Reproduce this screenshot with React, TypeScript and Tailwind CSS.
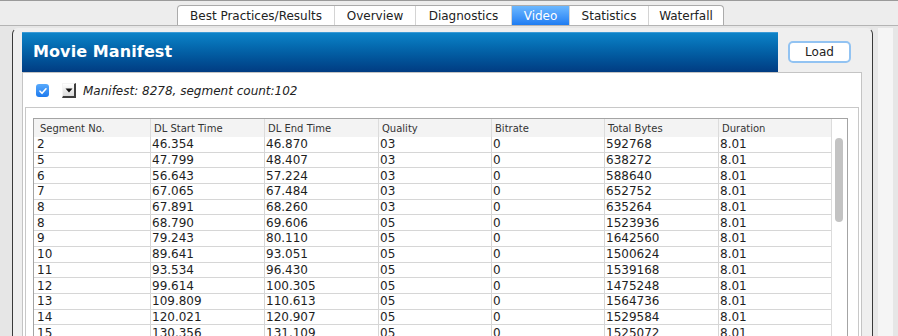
import React from 'react'

const TABS = [
  { label: 'Best Practices/Results', w: 'w-[156px]' },
  { label: 'Overview', w: 'w-[81px]' },
  { label: 'Diagnostics', w: 'w-[96px]' },
  { label: 'Video', w: 'w-[58px]', active: true },
  { label: 'Statistics', w: 'w-[79px]' },
  { label: 'Waterfall', w: 'w-[75px]' },
]

const COLUMNS = [
  { label: 'Segment No.', w: 'w-[116px]' },
  { label: 'DL Start Time', w: 'w-[114px]' },
  { label: 'DL End Time', w: 'w-[114px]' },
  { label: 'Quality', w: 'w-[113px]' },
  { label: 'Bitrate', w: 'w-[113px]' },
  { label: 'Total Bytes', w: 'w-[114px]' },
  { label: 'Duration', w: 'w-[113px]' },
]

const ROWS = [
  ['2', '46.354', '46.870', '03', '0', '592768', '8.01'],
  ['5', '47.799', '48.407', '03', '0', '638272', '8.01'],
  ['6', '56.643', '57.224', '03', '0', '588640', '8.01'],
  ['7', '67.065', '67.484', '03', '0', '652752', '8.01'],
  ['8', '67.891', '68.260', '03', '0', '635264', '8.01'],
  ['8', '68.790', '69.606', '05', '0', '1523936', '8.01'],
  ['9', '79.243', '80.110', '05', '0', '1642560', '8.01'],
  ['10', '89.641', '93.051', '05', '0', '1500624', '8.01'],
  ['11', '93.534', '96.430', '05', '0', '1539168', '8.01'],
  ['12', '99.614', '100.305', '05', '0', '1475248', '8.01'],
  ['13', '109.809', '110.613', '05', '0', '1564736', '8.01'],
  ['14', '120.021', '120.907', '05', '0', '1529584', '8.01'],
  ['15', '130.356', '131.109', '05', '0', '1525072', '8.01'],
]

function TabBar() {
  return (
    <div className="h-[26px] border-t border-b border-t-[#9a9a9a] border-b-[#b4b4b4] bg-[#ededed] pl-[177px]">
      <div className="mt-[4px] flex h-[20px] border border-b-0 border-[#ababab] rounded-t-[4px] bg-white overflow-hidden w-fit">
        {TABS.map((t, i) => (
          <div
            key={t.label}
            className={
              'flex items-center justify-center text-[12px] leading-none ' +
              t.w +
              (i > 0 ? ' border-l border-[#d4d4d4]' : '') +
              (t.active
                ? ' bg-gradient-to-b from-[#6cb8ff] to-[#1d7cf2] text-white'
                : ' text-[#222]')
            }
          >
            {t.label}
          </div>
        ))}
      </div>
    </div>
  )
}

function ManifestTable() {
  return (
    <div className="flex w-[815px] border border-[#a4a4a4] bg-white">
      <div className="flex flex-col">
        {/* header */}
        <div className="flex h-[18px] bg-[#f3f3f3]">
          {COLUMNS.map((c, i) => (
            <div
              key={c.label}
              className={
                'flex items-center text-[10px] text-[#333] ' +
                c.w +
                (i === 0 ? ' pl-[6px]' : ' pl-[3px] border-l border-[#dcdcdc]')
              }
            >
              {c.label}
            </div>
          ))}
        </div>
        {ROWS.map((r, ri) => (
          <div key={ri} className="flex h-[15.7px] border-b border-[#d6d6d6]">
            {r.map((v, ci) => (
              <div
                key={ci}
                className={
                  'flex items-center text-[12px] leading-none text-[#1e1e1e] ' +
                  COLUMNS[ci].w +
                  (ci === 0 ? ' pl-[3px]' : ' pl-[1px] border-l border-[#d6d6d6]')
                }
              >
                {v}
              </div>
            ))}
          </div>
        ))}
      </div>
      {/* scrollbar */}
      <div className="w-[16px] border-l border-[#dcdcdc] pt-[19px]">
        <div className="ml-[3px] w-[8px] h-[84px] rounded-full bg-[#c3c3c3]" />
      </div>
    </div>
  )
}

export default function App() {
  return (
    <div className="w-[898px] h-[336px] overflow-hidden bg-[#e6e6e6] font-['DejaVu_Sans',sans-serif]">
      <TabBar />

      <div className="flex">
        {/* left gutter */}
        <div className="w-[12px]" />

        {/* outer panel */}
        <div className="mt-[2px] w-[861px] h-[320px] border-l border-r border-t border-[#3a3a3a] border-t-transparent rounded-t-[6px] bg-[#efefef] pl-[9px] pt-[3px]">
          {/* header */}
          <div className="flex h-[40px] w-[840px]">
            <div className="flex items-center w-[756px] pl-[11px] pb-[1px] bg-gradient-to-b from-[#0d83c8] to-[#013c82] border-t border-[#3a9ad6]">
              <span className="text-white font-bold text-[16px] tracking-[0.1px]">Movie Manifest</span>
            </div>
            <div className="flex-1 pl-[10px] pt-[9px]">
              <button className="flex items-center justify-center w-[63px] h-[22px] rounded-[5px] border-2 border-[#92c3f2] bg-white text-[12px] text-[#222]">
                Load
              </button>
            </div>
          </div>

          {/* white panel */}
          <div className="w-[840px] h-[280px] border-l border-r border-t border-[#c4c4c4] bg-white">
            <div className="flex items-center h-[34px] pl-[13px] pt-[1px]">
              <div className="flex items-center justify-center w-[13px] h-[13px] rounded-[3px] bg-gradient-to-b from-[#58aafc] to-[#1b79ee]">
                <svg width="10" height="10" viewBox="0 0 10 10">
                  <path d="M2 5.2l2 2.1L8 2.8" fill="none" stroke="white" strokeWidth="1.6" strokeLinecap="round" strokeLinejoin="round" />
                </svg>
              </div>
              <div className="ml-[13px] flex items-center justify-center w-[14px] h-[15px] border-t border-l border-[#f4f4f4] border-r-2 border-b-2 border-r-[#3e3e3e] border-b-[#3e3e3e] bg-gradient-to-b from-white to-[#dadada]">
                <svg width="8" height="5" viewBox="0 0 8 5">
                  <path d="M0.5 0.5h7L4 4.5z" fill="#111" />
                </svg>
              </div>
              <span className="ml-[7px] text-[12px] italic text-[#222]">Manifest: 8278, segment count:102</span>
            </div>

            {/* inner panel */}
            <div className="mx-[2px] h-[240px] border-l border-r border-t border-[#c8c8c8] pl-[7px] pt-[10px]">
              <ManifestTable />
            </div>
          </div>
        </div>

        {/* right strip */}
        <div className="flex mt-[2px]">
          <div className="w-[5px] h-[320px] bg-[#e8e8e8]" />
          <div className="w-[15px] h-[320px] bg-[#f5f5f5]" />
          <div className="w-[5px] h-[320px] bg-[#e6e6e6]" />
        </div>
      </div>
    </div>
  )
}
